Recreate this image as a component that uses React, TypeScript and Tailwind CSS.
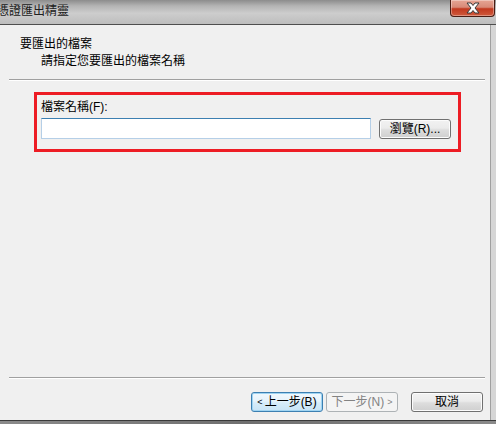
import React from "react";

const font = "font-['Liberation_Sans','Noto_Sans_CJK_TC',sans-serif]";

function CloseButton() {
  return (
    <div className="w-[45px] h-[17px] rounded-b-[4px] border border-t-0 border-[#4a1d14] bg-[linear-gradient(#e6a594_0%,#d88a78_45%,#c2391f_55%,#cf5a3d_100%)] flex items-center justify-center shadow-[inset_0_0_0_1px_rgba(255,255,255,0.35)]">
      <svg width="16" height="12" viewBox="0 0 16 12">
        <path
          d="M2 1 H6 L8 3.5 L10 1 H14 L10 6 L14 11 H10 L8 8.5 L6 11 H2 L6 6 Z"
          fill="#ffffff"
          stroke="#3a3a3a"
          strokeWidth="1"
          strokeLinejoin="round"
        />
      </svg>
    </div>
  );
}

function Button({
  children,
  variant = "normal",
}: {
  children: React.ReactNode;
  variant?: "normal" | "focus" | "disabled";
}) {
  const look =
    variant === "focus"
      ? "border-[#3c7fb1] bg-[linear-gradient(#f1f8fd_0%,#e6f3fb_45%,#d6ecf9_55%,#c8e4f6_100%)] text-black shadow-[inset_0_0_0_1px_#9fd4f2]"
      : variant === "disabled"
      ? "border-[#adb2b5] bg-[#f4f4f4] text-[#838383]"
      : "border-[#707070] bg-[linear-gradient(#f2f2f2_0%,#ebebeb_45%,#dddddd_55%,#cfcfcf_100%)] text-black shadow-[inset_0_0_0_1px_#fcfcfc]";
  return (
    <div
      className={`w-[72px] h-[20px] rounded-[3px] border flex items-center justify-center text-[12px] leading-none ${look}`}
    >
      {children}
    </div>
  );
}

export default function App() {
  return (
    <div className={`w-[496px] h-[424px] flex flex-col overflow-hidden bg-[#f0f0f0] text-black ${font}`}>
      {/* title bar */}
      <div className="h-[24px] flex items-start justify-between bg-[linear-gradient(#8c8c8c_0%,#b4b4b4_25%,#cdcdcd_55%,#bdbdbd_100%)]">
        <div className="ml-[-3px] mt-[5px] text-[12px] leading-[13px] text-[#202020]">憑證匯出精靈</div>
        <div className="mr-[1px]">
          <CloseButton />
        </div>
      </div>
      <div className="h-px bg-[#4e4e4e]" />

      <div className="flex flex-1">
        <div className="flex-1 flex flex-col">
          {/* header */}
          <div className="pt-[11px] text-[12px] leading-[17px]">
            <div className="pl-[20px]">要匯出的檔案</div>
            <div className="pl-[41px]">請指定您要匯出的檔案名稱</div>
          </div>
          <div className="mt-[9px] ml-[9px] mr-[5px] border-t border-[#a0a0a0] border-b border-b-white" />

          {/* highlighted field */}
          <div className="mt-[11px] ml-[34px] w-[427px] h-[60px] border-[3px] border-[#ed1c24] pl-[4px] pt-[5px]">
            <div className="text-[12px] leading-[15px]">檔案名稱(F):</div>
            <div className="mt-[3px] flex items-start gap-[8px]">
              <div className="w-[330px] h-[21px] bg-white border border-[#b5cfe7] border-t-[#3c7fb1]" />
              <div className="mt-[1px]">
                <Button>瀏覽(R)...</Button>
              </div>
            </div>
          </div>

          <div className="flex-1" />

          {/* footer */}
          <div className="ml-[9px] mr-[5px] border-t border-[#a0a0a0] border-b border-b-white" />
          <div className="mt-[13px] mb-[8px] mr-[7px] flex justify-end">
            <Button variant="focus">
              <span className="text-[9px] mr-[2px]">&lt;</span>上一步(B)
            </Button>
            <div className="ml-[3px]">
              <Button variant="disabled">
                下一步(N)<span className="text-[9px] ml-[3px]">&gt;</span>
              </Button>
            </div>
            <div className="ml-[13px]">
              <Button>取消</Button>
            </div>
          </div>
        </div>
        {/* right frame */}
        <div className="w-[6px] border-l border-[#a0a0a0] bg-[#d6d6d6]" />
      </div>

      {/* bottom frame */}
      <div className="h-[4px] border-t border-[#3a3a3a] bg-[linear-gradient(90deg,#8a8a8a,#6f6f6f_50%,#8a8a8a)]" />
    </div>
  );
}
